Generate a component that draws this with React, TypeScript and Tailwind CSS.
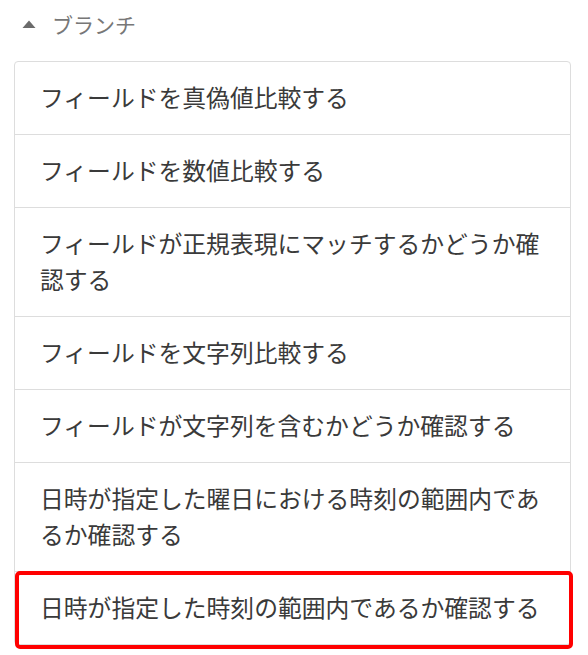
const items = [
  "フィールドを真偽値比較する",
  "フィールドを数値比較する",
  "フィールドが正規表現にマッチするかどうか確認する",
  "フィールドを文字列比較する",
  "フィールドが文字列を含むかどうか確認する",
  "日時が指定した曜日における時刻の範囲内であるか確認する",
  "日時が指定した時刻の範囲内であるか確認する",
];

export default function App() {
  return (
    <div
      className="min-h-[655px] w-[588px] bg-white"
      style={{ fontFamily: '"Noto Sans CJK JP", "Noto Sans", sans-serif' }}
    >
      <div className="flex h-[49px] items-center pl-[22px] text-[21px] text-[#777777]">
        <svg width="14" height="9" viewBox="0 0 14 9" className="mr-[16px]">
          <path d="M7 0.5 L13.5 8 L0.5 8 Z" fill="#6b6b6b" />
        </svg>
        <span>ブランチ</span>
      </div>
      <div className="ml-[14px] mt-[12px] w-[557px] rounded-[4px] border border-[#dddddd]">
        {items.map((t, i) => (
          <div
            key={t}
            className={`relative px-[25px] pt-[17px] pb-[19px] text-[23.8px] leading-[36px] text-[#3a3a3a] ${
              i > 0 ? "border-t border-[#dddddd]" : ""
            }`}
          >
            {t}
            {i === items.length - 1 ? (
              <div className="pointer-events-none absolute -top-[1px] left-0 -right-[3px] h-[78px] rounded-[5px] border-[4.5px] border-[#ff0000]" />
            ) : null}
          </div>
        ))}
      </div>
    </div>
  );
}
